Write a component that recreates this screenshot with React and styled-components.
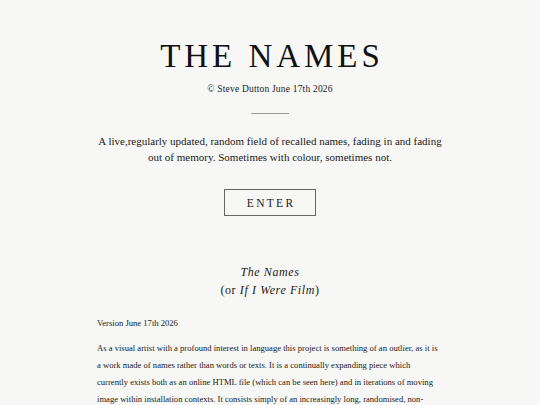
import React from "react";
import styled, { createGlobalStyle } from "styled-components";

const Global = createGlobalStyle`
  html, body { margin: 0; padding: 0; background: #f7f7f5; }
  body { font-family: "Liberation Serif", "DejaVu Serif", serif; color: #1a1a1a; }
`;

const Page = styled.main`
  display: flex;
  flex-direction: column;
  align-items: center;
  padding-top: 36px;
`;

const Title = styled.h1`
  margin: 0;
  font-weight: 400;
  font-size: 33px;
  letter-spacing: 0.12em;
  line-height: 40px;
  padding-left: 0.12em;
  color: #111;
`;

const Credit = styled.p`
  margin: 7px 0 0;
  font-size: 9.5px;
  line-height: 12px;
  letter-spacing: 0.02em;
  color: #222;
`;

const Rule = styled.hr`
  width: 38px;
  border: 0;
  border-top: 1px solid #999;
  margin: 18px 0 0;
`;

const Lead = styled.p`
  margin: 19px 0 0;
  width: 360px;
  text-align: center;
  font-size: 11px;
  line-height: 16px;
  color: #1a1a1a;
`;

const EnterButton = styled.button`
  margin-top: 24px;
  width: 92px;
  height: 27px;
  background: transparent;
  border: 1px solid #666;
  font-family: inherit;
  font-size: 11.5px;
  letter-spacing: 0.2em;
  padding: 0 0 0 0.2em;
  color: #1a1a1a;
`;

const WorkTitle = styled.p`
  margin: 47px 0 0;
  text-align: center;
  font-size: 12px;
  line-height: 18px;
  letter-spacing: 0.05em;
  color: #1a1a1a;
`;

const Notes = styled.section`
  width: 346px;
  margin-top: 16px;
  font-size: 8.6px;
  line-height: 17px;
  color: #1a1a1a;
`;

const NoteP = styled.p`
  margin: 0 0 8px;
`;

export default function App() {
  return (
    <>
      <Global />
      <Page>
        <Title>THE NAMES</Title>
        <Credit>© Steve Dutton June 17th 2026</Credit>
        <Rule />
        <Lead>
          A live,regularly updated, random field of recalled names, fading in and fading out of memory. Sometimes with colour, sometimes not.
        </Lead>
        <EnterButton>ENTER</EnterButton>
        <WorkTitle>
          <em>The Names</em>
          <br />
          (or <em>If I Were Film</em>)
        </WorkTitle>
        <Notes>
          <NoteP>Version June 17th 2026</NoteP>
          <NoteP>
            As a visual artist with a profound interest in language this project is something of an outlier, as it is a work made of names rather than words or texts. It is a continually expanding piece which currently exists both as an online HTML file (which can be seen here) and in iterations of moving image within installation contexts. It consists simply of an increasingly long, randomised, non-alphabetised list of people’s names. Each name refers to anyone whom I am able to recall (or recall
          </NoteP>
        </Notes>
      </Page>
    </>
  );
}
